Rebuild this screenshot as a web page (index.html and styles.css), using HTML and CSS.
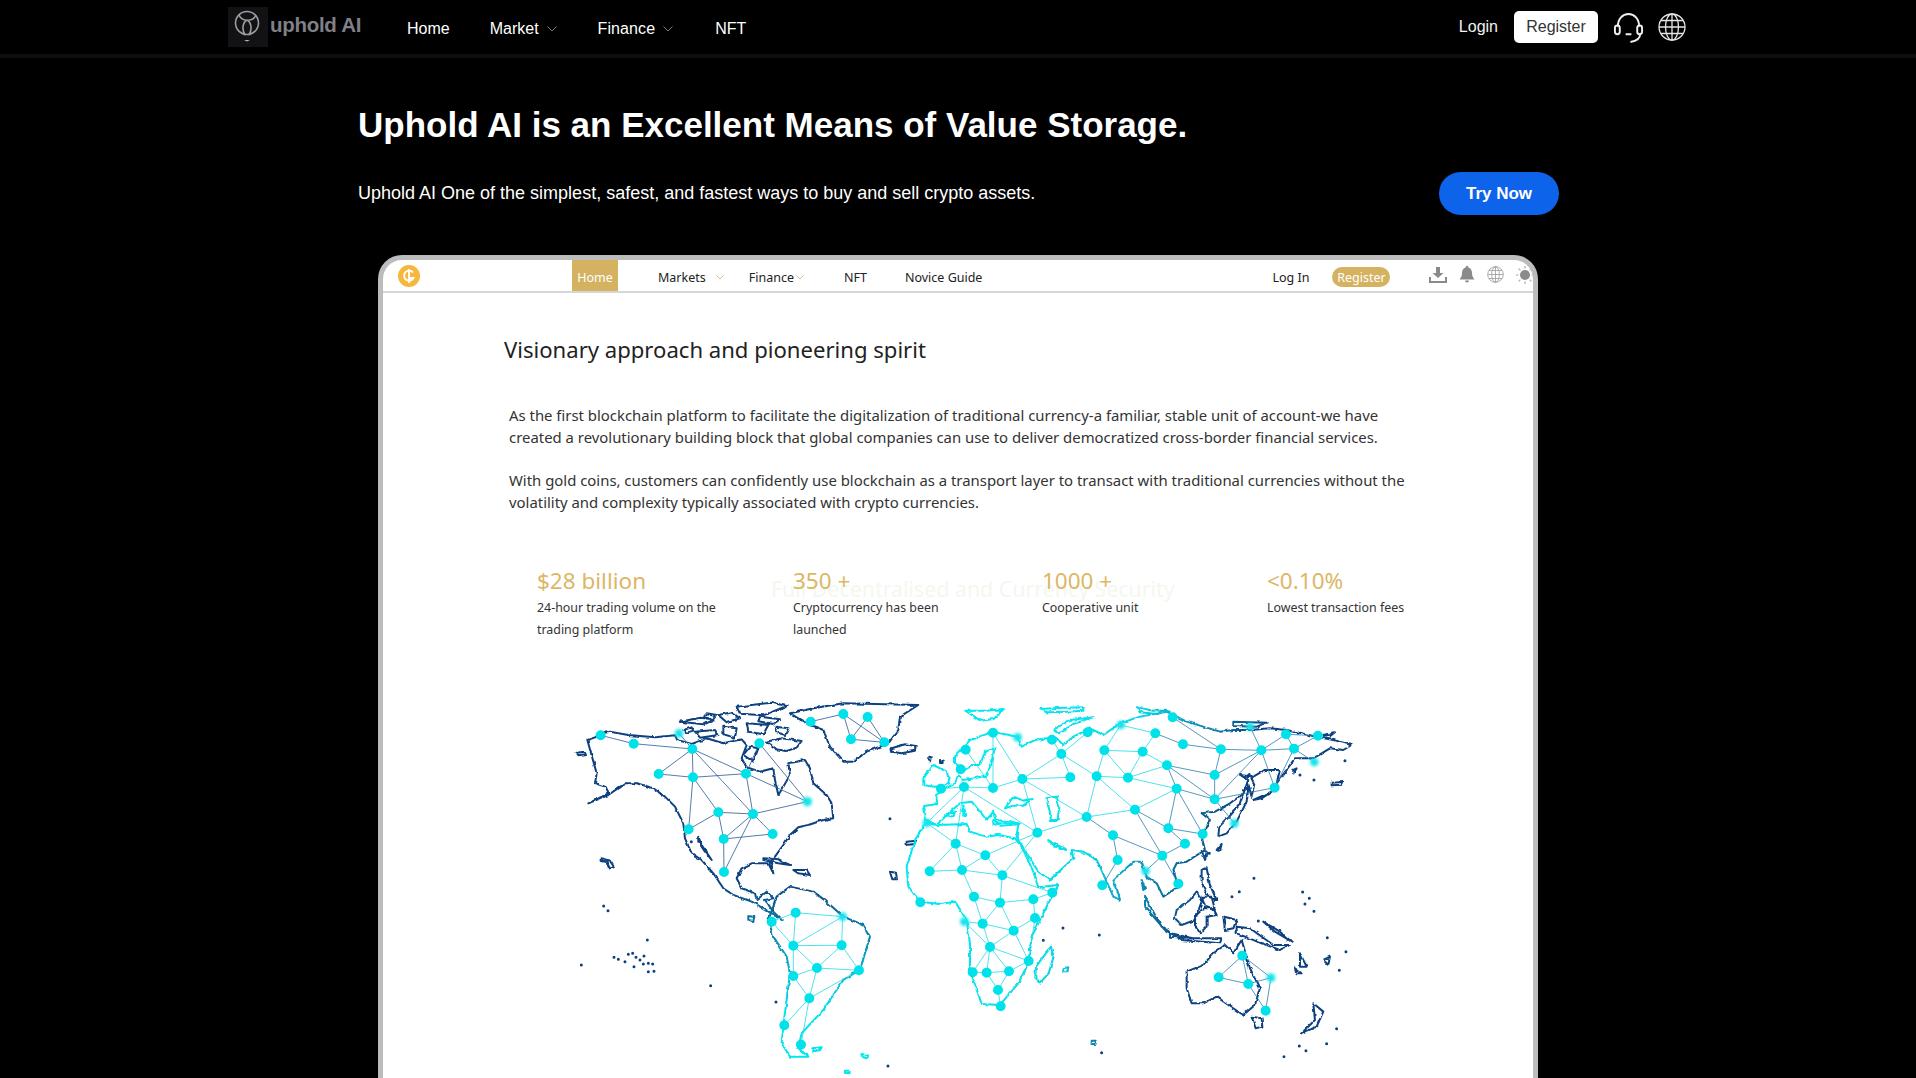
FILE: index.html
```html
<!DOCTYPE html>
<html lang="en">
<head>
<meta charset="utf-8">
<title>Uphold AI</title>
<link rel="stylesheet" href="styles.css">
</head>
<body>
<header class="topbar">
  <a class="brand">
    <span class="brand-mark">
      <svg viewBox="0 0 40 40" width="40" height="40"><g fill="none" stroke="#9a9ca1" stroke-width="1.600"><circle cx="19" cy="16" r="11.500"/><path d="M11 8c3 7 14 7 17 0M19 13c-5 3-5 10-2 15M19 13c5 3 5 10 2 15"/></g><path d="M16 33h6l-3 1.600z" fill="#b5b6ba"/></svg>
    </span>
    <span class="brand-name">uphold AI</span>
  </a>
  <nav class="topnav">
    <a>Home</a>
    <a class="nav-market">Market<svg class="caret" viewBox="0 0 10 6"><path d="M.5.5 5 5 9.500.5" fill="none" stroke="#777"/></svg></a>
    <a class="nav-finance">Finance<svg class="caret" viewBox="0 0 10 6"><path d="M.5.5 5 5 9.500.5" fill="none" stroke="#777"/></svg></a>
    <a>NFT</a>
  </nav>
  <div class="top-actions">
    <a class="login">Login</a>
    <a class="register">Register</a>
    <svg class="headset" viewBox="0 0 32 32" fill="none" stroke="#eee" stroke-width="2"><path d="M5 15C5 7 10 2 16 2s11 5 11 13"/><rect x="2" y="14" width="5" height="9" rx="2.500"/><rect x="25" y="14" width="5" height="9" rx="2.500"/><path d="M28 23c0 5-4 7-10 8M13 23h6"/></svg>
    <svg class="globe" viewBox="0 0 28 28" fill="none" stroke="#e4e4e4" stroke-width="1.300"><circle cx="14" cy="14" r="13"/><ellipse cx="14" cy="14" rx="6.500" ry="13"/><path d="M14 1v26M1 14h26M3 7.500h22M3 20.500h22"/></svg>
  </div>
</header>

<main class="page">
  <section class="hero">
    <h1>Uphold AI is an Excellent Means of Value Storage.</h1>
    <div class="hero-row">
      <p>Uphold AI One of the simplest, safest, and fastest ways to buy and sell crypto assets.</p>
      <a class="try">Try Now</a>
    </div>
  </section>

  <section class="device">
    <div class="mock-nav">
      <span class="mock-logo">
        <svg viewBox="0 0 22 22" width="22" height="22"><circle cx="11" cy="11" r="11" fill="#f6b73c"/><path d="M15 7.500A5 5 0 1 0 15.500 13H11.500M11 4v14" fill="none" stroke="#fff" stroke-width="1.800"/></svg>
      </span>
      <a class="mock-link mock-active">Home</a>
      <a class="mock-link mock-markets">Markets<svg class="mock-caret" viewBox="0 0 8 5"><path d="M.5.5 4 4 7.500.5" fill="none" stroke="#dcc080"/></svg></a>
      <a class="mock-link mock-finance">Finance<svg class="mock-caret tight" viewBox="0 0 8 5"><path d="M.5.5 4 4 7.500.5" fill="none" stroke="#dcc080"/></svg></a>
      <a class="mock-link mock-nft">NFT</a>
      <a class="mock-link mock-guide">Novice Guide</a>
      <a class="mock-link mock-login">Log In</a>
      <a class="mock-register">Register</a>
      <div class="mock-icons">
        <svg viewBox="0 0 18 16" width="18" height="16" fill="#8a8a8a"><path d="M7 0h4v6h3.500L9 11 3.500 6H7zM0 10h2v4h14v-4h2v6H0z"/></svg>
        <svg viewBox="0 0 16 17" width="16" height="17" fill="#8a8a8a"><path d="M8 0c1 0 1.400.7 1.400 1.400C12 2.200 13 4.500 13 7c0 3 1 4.500 2.500 6.500H.5C2 11.500 3 10 3 7c0-2.500 1-4.800 3.600-5.600C6.600.7 7 0 8 0zM6 14.500h4a2 2 0 0 1-4 0z"/></svg>
        <svg viewBox="0 0 17 17" width="17" height="17" fill="none" stroke="#999" stroke-width=".8"><circle cx="8.500" cy="8.500" r="7.800"/><ellipse cx="8.500" cy="8.500" rx="3.800" ry="7.800"/><path d="M8.500.7v15.600M.7 8.500h15.600M2 4.500h13M2 12.500h13"/></svg>
        <svg viewBox="0 0 18 18" width="18" height="18" fill="#8a8a8a"><circle cx="9" cy="9" r="5"/><path d="M9 0v2.500M9 15.500V18M0 9h2.500M15.500 9H18M2.600 2.600l1.800 1.800M13.600 13.600l1.800 1.800M15.400 2.600l-1.800 1.800M4.400 13.600l-1.800 1.800" stroke="#aaa" stroke-width="1.200"/></svg>
      </div>
    </div>

    <div class="mock-body">
      <h2>Visionary approach and pioneering spirit</h2>
      <p class="copy">As the first blockchain platform to facilitate the digitalization of traditional currency-a familiar, stable unit of account-we have created a revolutionary building block that global companies can use to deliver democratized cross-border financial services.</p>
      <p class="copy">With gold coins, customers can confidently use blockchain as a transport layer to transact with traditional currencies without the volatility and complexity typically associated with crypto currencies.</p>

      <div class="stats">
        <span class="ghost">Full Decentralised and Currency Security</span>
        <div class="stat s1"><b>$28 billion</b><span>24-hour trading volume on the trading platform</span></div>
        <div class="stat s2"><b>350 +</b><span>Cryptocurrency has been launched</span></div>
        <div class="stat s3"><b>1000 +</b><span>Cooperative unit</span></div>
        <div class="stat s4"><b>&lt;0.10%</b><span>Lowest transaction fees</span></div>
      </div>

      <svg class="map" viewBox="560 680 820 398" width="820" height="398">
        <defs>
          <linearGradient id="gAm" gradientUnits="userSpaceOnUse" x1="0" y1="600" x2="0" y2="1000"><stop offset="0" stop-color="#0c3f7e"/><stop offset="1" stop-color="#06e6f0"/></linearGradient>
          <linearGradient id="gEu" gradientUnits="userSpaceOnUse" x1="350" y1="300" x2="960" y2="520"><stop offset="0" stop-color="#06e8f0"/><stop offset=".42" stop-color="#08d8e8"/><stop offset="1" stop-color="#0c3f7e"/></linearGradient>
          <filter id="soft" x="-60%" y="-60%" width="220%" height="220%"><feGaussianBlur stdDeviation="4"/></filter>
          <filter id="coast" filterUnits="userSpaceOnUse" x="0" y="0" width="1500" height="1300"><feTurbulence type="fractalNoise" baseFrequency=".06" numOctaves="2" seed="4"/><feDisplacementMap in="SourceGraphic" scale="10" xChannelSelector="R" yChannelSelector="G"/></filter>
        </defs>

        <g class="americas" transform="translate(560 680) scale(.3333)">
          <g class="coast" stroke="url(#gAm)" filter="url(#coast)">
            <path d="M82 180l23-8 20-12 25-5 55 10 80 7 60-6 7 14 43 12 45-17 50 15 55-12 15 17-15 40 15 27 40 13 40-10 5 35 10 45 15-25 20-35-5-35 25-5 25-5 15 25 10 45 40 35 15 25 5 45-30 5-45 15-30 7-25 23-20 30-25 35-13 15 8 35-15-30-50 0-30 15-15 30 15 30 40 15 5 20 30-25 20 20-25 5 25 35 25 25-30-20-60-35-55-20-30-20-30-45-35-40-30-20-20-45-5-45-25-50-30-30-35-25-50-15-35 0-50 35-60 25 60-30-10-20-30-10 5-30z"/>
            <path d="M360 125l60-12 40 5-30 15zM475 105l40-8 25 18-40 12zM530 80l105-12 45 10-70 28-70-5zM490 140l40 5-5 28-35-10zM560 130l65 5-15 28-45-8zM620 185l45-10 60 8-15 20-30 10-30-5zM550 225l20-25 25 5-15 40zM405 155l60-5 10 15-55 8zM440 100l30 5-10 12-25-5zM370 150l25-8 5 10-20 6zM600 110l60 8-20 14-45-8zM650 140l35 5-10 20-30-10z"/>
            <path d="M690 100l70-15 90-15 225 5-55 35-5 40-30 40-65 25-40 30h-30l-40-45-20-50-50-20z"/>
            <path d="M995 205l40-12 32 5-2 14-40 8-30-5zM50 218l22-3 3 8-20 3zM610 535l40 2 40 18-35-5-45-10zM700 570l40 0 10 15-35-5zM125 535l25 8 12 18-12 5-10-20-15-3zM415 470l10 25 30 45-20-25-20-30z"/>
            <path d="M650 650l-10 30-15 40 15 50 40 60 10 50-10 80-10 80-5 50 25 40 55 0-30-25 10-45 65-70 60-90 50-30 30-100-20-35-60-25-50-45-40-30-70-15z"/>
            <path d="M760 1105l25-3-5 9-20 3zM905 1122l20 5-2 8-18-5zM855 1172h14v7h-14zM1105 230l10 3-2 8-8-3zM1140 240l8 2v7h-8zM1040 485l28-3-5 10-23 3zM990 575l18 3 3 20-14 0zM565 708l18 3-3 12-15-3z"/>
          </g>
          <path class="spots" stroke="#0c3f7e" d="M64 855h0M131 678h0M144 692h0M262 780h0M162 832h0M175 838h0M195 845h0M205 823h0M218 820h0M228 832h0M240 840h0M222 860h0M252 828h0M250 852h0M265 850h0M278 852h0M265 875h0M282 874h0M452 917h0M648 966h0M984 1158h0M394 485h0M990 416h0"/>
          <path class="links" stroke="#2a5a94" d="M122 166L221 191L397 207M357 160L397 207M397 207L296 282M397 207L399 292M397 207L579 402M397 207L742 365M296 282L399 292L558 281L598 190L742 365M558 281L579 402M399 292L475 397M399 292L386 448M475 397L579 402L742 365M475 397L386 448M475 397L491 477L579 402L638 462L491 477L492 576L579 402M752 125L850 102L873 178L923 111L973 187L873 178M850 102L973 187"/>
          <path class="links" stroke="#1fdce6" d="M635 725L707 698L848 710L700 797L635 725M707 698L700 797L845 796L848 710M700 797L771 864L845 796L897 871L771 864L700 888L748 955L771 864M748 955L897 871M700 888L700 797M748 955L673 1036M748 955L723 1094"/>
          <path class="dots" d="M122 166h0M221 191h0M397 207h0M296 282h0M399 292h0M598 190h0M558 281h0M475 397h0M579 402h0M386 448h0M491 477h0M638 462h0M492 576h0M752 125h0M850 102h0M923 111h0M873 178h0M973 187h0M635 725h0M707 698h0M700 797h0M845 796h0M771 864h0M897 871h0M700 888h0M748 955h0M673 1036h0M723 1094h0"/>
          <g class="haze" filter="url(#soft)"><circle cx="357" cy="160" r="13"/><circle cx="742" cy="365" r="14"/><circle cx="848" cy="710" r="13"/></g>
        </g>

        <g class="eurasia" transform="translate(900 680) scale(.3333)">
          <g class="coast" stroke="url(#gEu)" filter="url(#coast)">
            <path d="M78 428L45 480 20 560 25 620 60 665 120 672 165 665 200 720 210 790 210 870 245 972 300 975 355 910 385 850 395 770 450 660 475 615 415 622 400 575 365 500 345 475 295 465 260 470 210 455 200 432 110 435z"/>
            <path d="M110 435L78 420 72 378 112 372 108 345 130 330 165 310 175 285 190 300 225 295 262 285 285 205 255 215 240 255 215 255 195 270 165 250 165 230 210 180 280 155 350 170 365 200 405 180 440 175 470 175 490 195 520 170 570 145 610 165 660 130 720 110 800 95 860 125 960 155 1000 150 1050 150 1110 145 1160 150 1250 170 1300 180 1355 195 1330 210 1290 205 1240 235 1185 235 1130 310 1140 270 1095 270 1060 290 1020 285 1045 300 1030 340 990 370 945 395 905 400 930 420 905 470 915 510 860 545 830 550 820 570 835 620 790 650 770 610 740 590 725 545 700 545 650 590 640 600 655 640 660 660 640 650 600 560 590 540 550 515 515 510 520 535 450 600 415 575 380 520 350 470 355 430 290 430 280 395 260 420 215 365 180 370 140 405z"/>
            <path d="M315 385l25-35 30 12 25-5-25 20-30 0zM440 355l30-5 8 30-5 40-20 0-5-30zM445 480l25 15 30 15-35-10zM280 420l50 4 30 8-55 5-25-5zM190 375l8 30-8 5zM135 405l30-10-5 15z"/>
            <path d="M70 295l30-40 40 20 10 35-45 10-35-5zM196 92l60 0 55-5-30 30-40 5zM420 87l50-3 80-2 0 10-50 3-60 2zM710 82l50 10 40 0-30 10-50-5zM1000 125l100 3-30 12-70-2zM1270 165l35-8-15 12zM460 150l50-30 70-8-60 20-40 28z"/>
            <path d="M955 470l25-10 30-35 30-60 5-40-12 5-15 45-30 35-30 30zM950 510l15-18-5 20zM905 510l15 5-5 25zM1060 360l55-25-30 20zM1040 290l8-8 15 30-8 38-8-30zM1180 270l10-5-10 15z"/>
            <path d="M725 600l10 25-5 5zM735 650l50 90 30 20 60 15 90 0-5 15-115-10-50-30-60-70zM830 690l40-30 20-25 15 30-20 55-40 15-20-20zM885 710l25-25 30 0 10 20-30 5 0 30-20 20-15-25zM905 570l15-5 10 50 20 45-25-10-20-40zM970 710l40 10-10 25-25 5zM1010 740l40 5 70 50 50 0-30 15-55-20-50-20-25-10zM810 760l60 15-60-5zM905 650l30 0 10 40-30-10zM1090 725l50 30 35 30-50-30z"/>
            <path d="M860 875l50-20 30-35 35-25 25 25 25-40 25 85 30 60-15 50-35 30-45-30-35-25-40 20-35 0-15-45zM1055 1010l30 5 2 25-20 5z"/>
            <path d="M408 860l45-60 8 30-15 50-25 28-15-15zM1205 1060l40-40-5-50 30 25-20 45zM1200 820l20 40-20 0zM1185 865l20 15-15 0zM1270 840l20-10-5 25zM575 1082h12v10h-12zM1295 308l35-2-5 8-30 2zM490 865l15-3-3 12-12 0z"/>
          </g>
          <path class="spots" stroke="#0c3f7e" d="M489 744h0M598 765h0M430 781h0M1062 595h0M1018 635h0M996 650h0M1208 636h0M1228 655h0M1215 672h0M1242 694h0M1282 773h0M1338 815h0M1318 871h0M1310 1046h0M1280 1091h0M1198 1098h0M1218 1112h0M1152 1130h0M605 1118h0M928 520h0M1242 300h0M1200 285h0M1335 242h0M1075 723h0"/>
          <path class="links" stroke="#1fdce6" d="M279 158L279 324M279 158L367 297M197 209L279 324M192 321L279 324L367 297L511 292M192 321L123 326M192 321L80 429M192 321L412 458M192 321L167 491M367 297L484 222L456 179M484 222L563 157M484 222L511 292M484 222L590 289M367 297L412 458M367 297L560 411M613 211L662 135L766 160M613 211L590 289L684 293L801 256M613 211L684 293M613 211L728 215L684 293M728 215L766 160M728 215L801 256M590 289L560 411M590 289L705 389M684 293L830 326M560 411L412 458M560 411L705 389M705 389L830 326M412 458L256 526M412 458L307 586M80 429L167 491L256 526L186 570L307 586L256 526M167 491L89 574L186 570L167 491M186 570L222 650L300 668L400 658L457 638L307 586L300 668M222 650L248 731L300 668L341 752L248 731L270 801L341 752L405 714L400 658M405 714L386 843L341 752M193 725L248 731M193 725L270 801L386 843M270 801L218 877L260 878L327 874L386 843M270 801L260 878L294 930L302 979M270 801L327 874L294 930"/>
          <path class="links" stroke="#2a7fb0" d="M766 160L849 193L963 208L1084 211M818 112L963 208M801 256L944 285L963 208M801 256L830 326L944 358L944 285L1084 211L944 358L1124 323L1084 211M1084 211L1158 163L1182 206L1084 211M1158 163L1254 167L1182 206L1243 246M1182 206L1124 323M1050 140L1084 211M801 256L944 358M830 326L805 445L705 389M830 326L908 462M705 389L787 527L639 466L560 411M639 466L653 540L607 616M805 445L855 491L787 527M805 445L908 462M787 527L737 573M787 527L835 611M944 358L1003 430M1027 827L956 892L1045 912L1113 893L1027 827L1045 912L1097 992L1113 893"/>
          <path class="dots" d="M279 158h0M197 209h0M182 268h0M123 326h0M192 321h0M279 324h0M367 297h0M456 179h0M484 222h0M563 157h0M613 211h0M511 292h0M590 289h0M684 293h0M728 215h0M766 160h0M818 112h0M849 193h0M963 208h0M801 256h0M830 326h0M944 285h0M944 358h0M1084 211h0M1158 163h0M1182 206h0M1254 167h0M1124 323h0M705 389h0M560 411h0M412 458h0M167 491h0M256 526h0M89 574h0M186 570h0M307 586h0M222 650h0M300 668h0M400 658h0M457 638h0M61 667h0M405 714h0M248 731h0M341 752h0M270 801h0M386 843h0M218 877h0M260 878h0M327 874h0M294 930h0M302 979h0M639 466h0M653 540h0M607 616h0M805 445h0M855 491h0M908 462h0M787 527h0M835 611h0M1027 827h0M956 892h0M1045 912h0M1097 992h0"/>
          <g class="haze" filter="url(#soft)"><circle cx="353" cy="172" r="13"/><circle cx="662" cy="135" r="13"/><circle cx="1050" cy="140" r="12"/><circle cx="1243" cy="246" r="13"/><circle cx="80" cy="429" r="13"/><circle cx="193" cy="725" r="13"/><circle cx="737" cy="573" r="13"/><circle cx="1003" cy="430" r="13"/><circle cx="1113" cy="893" r="13"/></g>
        </g>
      </svg>
    </div>
  </section>
</main>
</body>
</html>
```
FILE: styles.css
```css
* { box-sizing: border-box; }
html, body { margin: 0; height: 100%; }
body {
  background: #000;
  color: #fff;
  font-family: "Liberation Sans", Arial, sans-serif;
  overflow: hidden;
}
a { color: inherit; text-decoration: none; }

/* top bar */
.topbar {
  height: 58px;
  border-bottom: 4px solid #0e0e0e;
  display: flex;
  align-items: flex-start;
  padding: 7px 0 0 228px;
}
.brand { display: flex; align-items: center; width: 179px; height: 40px; }
.brand-mark { width: 40px; height: 40px; background: #121214; display: block; }
.brand-mark svg { display: block; }
.brand-name {
  margin: -4px 0 0 2px;
  font: bold 20.500px "Liberation Sans", sans-serif;
  color: #7f8187;
  letter-spacing: -.3px;
}
.topnav { display: flex; align-items: center; height: 42px; margin-top: 1px; font-size: 16px; color: #fff; }
.topnav a { display: flex; align-items: center; margin-right: 40px; white-space: nowrap; }
.topnav .nav-market { margin-right: 41px; }
.topnav .nav-finance { margin-right: 42px; letter-spacing: .1px; }
.caret { width: 10px; height: 6px; margin: 0 0 0 8px; }
.top-actions { display: flex; align-items: center; margin-left: auto; margin-right: 230px; height: 36px; margin-top: 2px; font-size: 16px; }
.login { color: #f2f2f2; margin-right: 16px; }
.register {
  width: 84px; height: 32px;
  display: flex; align-items: center; justify-content: center;
  background: #fff; color: #333; border-radius: 5px;
}
.headset { width: 31px; height: 31px; margin-left: 15px; }
.globe { width: 28px; height: 28px; margin-left: 14px; }

/* hero */
.page { padding-left: 358px; }
.hero { width: 1201px; }
.hero h1 { margin: 47px 0 0; font-size: 35px; line-height: 40px; font-weight: bold; color: #fff; }
.hero-row { display: flex; align-items: center; justify-content: space-between; margin-top: 27px; }
.hero-row p { margin: 0; font-size: 18px; }
.try {
  width: 120px; height: 43px;
  display: flex; align-items: center; justify-content: center;
  background: #0d63ea; border-radius: 22px;
  font-size: 17px; font-weight: bold;
}

/* device frame */
.device {
  width: 1160px;
  margin: 40px 0 0 20px;
  height: 900px;
  background: #fff;
  border: 5px solid #bcbcbc;
  border-bottom: 0;
  border-radius: 24px 24px 0 0;
  font-family: "Noto Sans", "Open Sans", sans-serif;
  color: #222;
  overflow: hidden;
}
.mock-nav {
  height: 33px;
  border-bottom: 2px solid #d6d6d6;
  display: flex;
  align-items: stretch;
  font-size: 12.500px;
}
.mock-nav > * { flex: none; white-space: nowrap; }
.mock-logo { margin: 5px 0 0 15px; width: 22px; }
.mock-logo svg { display: block; }
.mock-link { display: flex; align-items: center; color: #222; padding-top: 3px; }
.mock-active { background: #d4b25f; color: #fff; width: 46px; justify-content: center; margin-left: 152px; }
.mock-markets { margin-left: 40px; }
.mock-caret { width: 8px; height: 5px; margin-left: 10px; }
.mock-caret.tight { margin-left: 2px; }
.mock-finance { margin-left: 25px; }
.mock-nft { margin-left: 40px; }
.mock-guide { margin-left: 38px; }
.mock-login { margin-left: 290px; }
.mock-register {
  align-self: center;
  margin: 3px 0 0 23px;
  width: 58px; height: 20px;
  background: #d4b25f; color: #fff;
  border-radius: 10px;
  display: flex; align-items: center; justify-content: center;
}
.mock-icons { display: flex; align-items: center; gap: 12px; margin-left: 39px; margin-top: -2px; }

.mock-body { padding: 0; }
.mock-body h2 { margin: 40px 0 0 121px; font-size: 22.100px; line-height: 32px; font-weight: 400; color: #222; white-space: nowrap; }
.copy { width: 905px; margin: 0 0 21.500px 126px; font-size: 14.900px; line-height: 21.800px; color: #333; }
.mock-body h2 + .copy { margin-top: 40px; }
.stats { position: relative; height: 100px; margin-top: 51px; display: flex; }
.ghost { position: absolute; left: 388px; top: 9px; font-size: 21.350px; color: #f3f8ef; white-space: nowrap; }
.stat { position: relative; display: flex; flex-direction: column; flex: none; }
.stat b { font-size: 22.500px; line-height: 32px; font-weight: 400; color: #dcb766; }
.stat span { font-size: 12.400px; line-height: 22px; color: #333; }
.s1 { margin-left: 154px; width: 256px; padding-right: 60px; }
.s2 { width: 249px; padding-right: 90px; }
.s3 { width: 225px; }
.s4 { width: 190px; }
.map { display: block; margin: 15px 0 0 177px; }

/* map strokes */
.coast { fill: none; stroke-width: 6; stroke-linejoin: round; }
.links { fill: none; stroke-width: 2.400; }
.dots { fill: none; stroke: #00e2ea; stroke-width: 30; stroke-linecap: round; }
.spots { fill: none; stroke-width: 9; stroke-linecap: round; }
.haze { fill: #12e4ec; }
```
